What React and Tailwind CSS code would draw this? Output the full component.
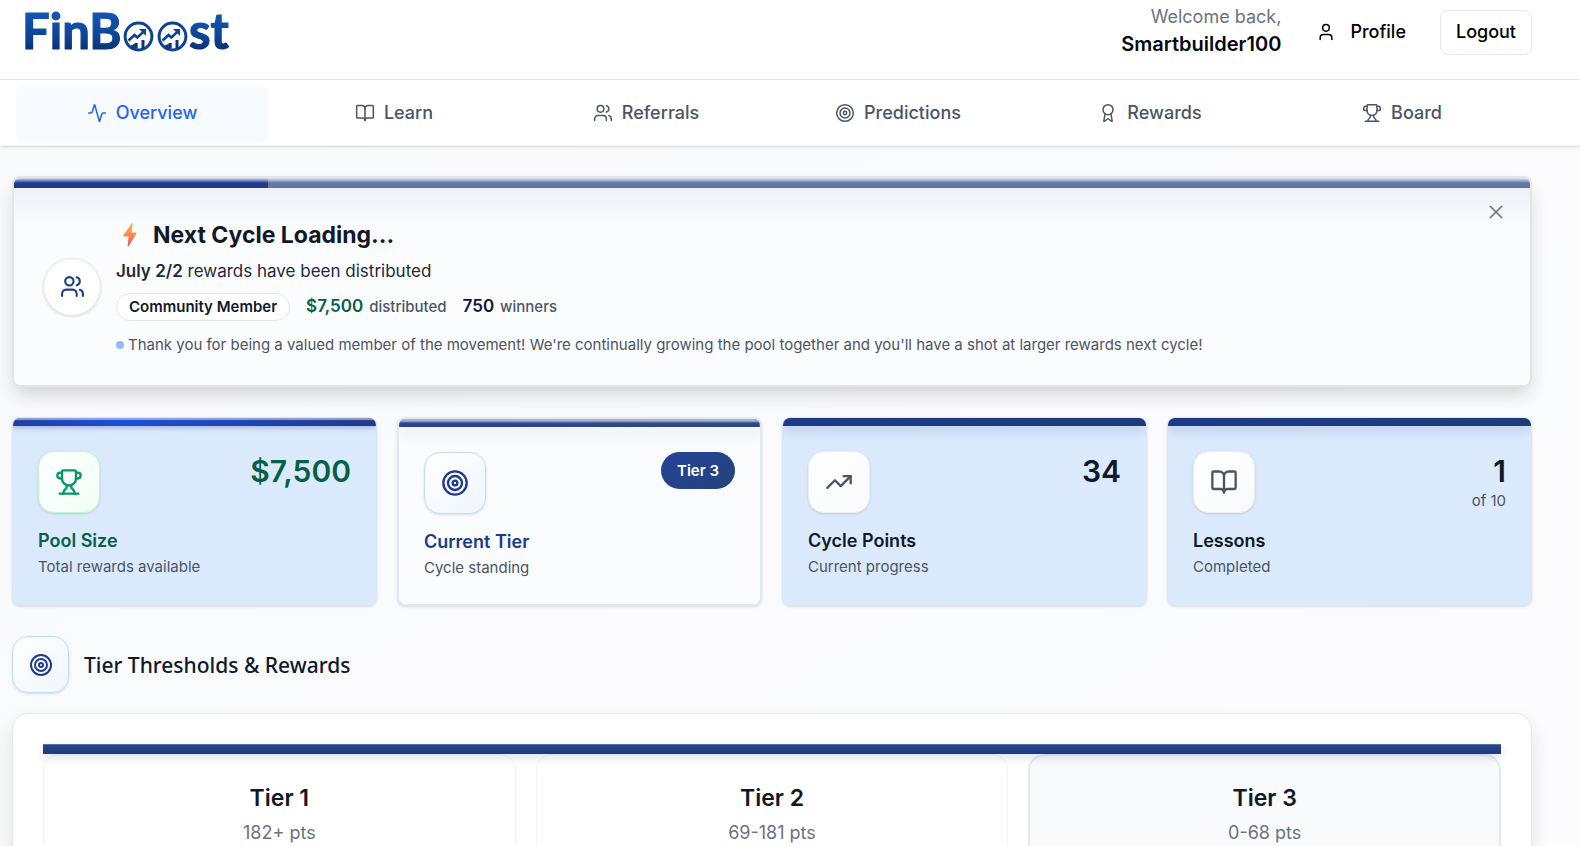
import React from 'react';
import { Activity, Award, BookOpen, Target, TrendingUp, Trophy, User, Users, X } from 'lucide-react';

const tabs = [
  { label: 'Overview', icon: Activity },
  { label: 'Learn', icon: BookOpen },
  { label: 'Referrals', icon: Users },
  { label: 'Predictions', icon: Target },
  { label: 'Rewards', icon: Award },
  { label: 'Board', icon: Trophy },
];

const tiers = [
  { name: 'Tier 1', range: '182+ pts', style: 'border-gray-100 bg-white' },
  { name: 'Tier 2', range: '69-181 pts', style: 'border-gray-100 bg-white' },
  { name: 'Tier 3', range: '0-68 pts', style: 'border-slate-200 bg-[#f9fafc] inset-ring inset-ring-slate-200' },
];

function LogoCoin({ x }) {
  return (
    <g transform={`translate(${x} 35.5)`}>
      <circle r="13.4" fill="#fff" stroke="#0e4292" strokeWidth="3" />
      <path d="M-10 4 L-4 -1.5 L-1.2 1 L4.6 -4.4" fill="none" stroke="#0d3f90" strokeWidth="2.6" />
      <path d="M0.5 -7.5 H7.5 V-0.5 Z" fill="#0f4699" />
      <path d="M-3.8 12 V6.5 H-0.8 V12 Z M3 12 V3.5 H6 V12 Z" fill="#0b347c" />
      <path d="M-8.5 9.5 L-3.6 7 V12.5 Z" fill="#0b347c" />
    </g>
  );
}

function Logo() {
  return (
    <svg width="212" height="64" viewBox="0 0 212 64" className="overflow-visible" role="img" aria-label="FinBoost">
      <defs>
        <linearGradient id="logoBlue" gradientUnits="userSpaceOnUse" x1="0" y1="12" x2="0" y2="50">
          <stop offset="0" stopColor="#1256b4" />
          <stop offset="0.6" stopColor="#0e4596" />
          <stop offset="1" stopColor="#0b2f70" />
        </linearGradient>
      </defs>
      <g fill="url(#logoBlue)" stroke="url(#logoBlue)" strokeWidth="1.2" fontFamily="Lato, sans-serif" fontWeight="700" fontSize="49">
        <text x="-2" y="48">FinB</text>
        <text x="165" y="48">st</text>
      </g>
      <LogoCoin x={114.5} />
      <LogoCoin x={148.5} />
    </svg>
  );
}

function Bolt() {
  return (
    <svg width="16" height="24" viewBox="0 0 16 24" aria-hidden="true">
      <defs>
        <linearGradient id="bolt" x1="0" y1="0" x2="0" y2="1">
          <stop offset="0" stopColor="#fdb44b" />
          <stop offset="0.5" stopColor="#fb8a4c" />
          <stop offset="1" stopColor="#f0475f" />
        </linearGradient>
      </defs>
      <path d="M9.6 .6 1.4 12.3c-.4.6-.1 1.1.6 1.1h4.6L5.6 23c-.1.7.6.8 1 .2l7.8-12.4c.4-.6.1-1.2-.6-1.2H9.6L10.7 1c.1-.7-.7-1-1.1-.4Z" fill="url(#bolt)" />
    </svg>
  );
}

function IconTile({ icon: Icon, size = 'size-[62px]', iconSize = 28, style }) {
  return (
    <div className={`flex shrink-0 items-center justify-center rounded-2xl border bg-gradient-to-br from-white shadow-sm ${size} ${style}`}>
      <Icon size={iconSize} />
    </div>
  );
}

function StatCard({ card, stripe, icon, tile, title, titleColor, note, children }) {
  return (
    <article className={`flex flex-col overflow-hidden rounded-lg shadow-sm ${card}`}>
      <div className={`h-2 shrink-0 ${stripe}`} />
      <div className="flex flex-1 flex-col px-[25px] pt-[25px] pb-6">
        <div className="flex items-start justify-between">
          <IconTile icon={icon} style={tile} />
          {children}
        </div>
        <h3 className={`mt-[14px] text-lg/7 font-semibold ${titleColor}`}>{title}</h3>
        <p className="text-[15px]/6 text-[#4b5563]">{note}</p>
      </div>
    </article>
  );
}

const blueCard = 'border border-[#dbe6f5] bg-gradient-to-br from-[#dbe9fd] to-[#dceafd]';
const plainTile = 'border-[#e9eef5] to-[#f9fafb] text-[#4b5563]';
const navyStripe = 'bg-gradient-to-r from-[#1e3a8a] to-[#1c3c78] shadow-[0_4px_12px_rgba(30,58,138,0.18)]';

export default function App() {
  return (
    <div className="min-h-screen bg-gradient-to-br from-[#f8f9fb] to-[#fcfcfe] font-['Inter',sans-serif] text-[#111827]">
      <header className="flex items-start justify-between border-b border-gray-200 bg-white pt-[5px] pr-12 pb-5 pl-6 shadow-sm">
        <a href="#home" className="-mt-1 h-[55px]"><Logo /></a>
        <div className="flex items-center">
          <div className="text-right">
            <p className="text-lg/6 text-[#6b7280]">Welcome back,</p>
            <p className="text-xl/[30px] font-semibold text-gray-950">Smartbuilder100</p>
          </div>
          <button className="ml-[35px] flex items-center gap-[14px] text-lg font-medium text-black">
            <User size={20} strokeWidth={1.8} />
            Profile
          </button>
          <button className="ml-[34px] h-[45px] rounded-lg border border-gray-200 bg-white px-[15px] text-lg font-medium text-black">Logout</button>
        </div>
      </header>

      <nav className="grid grid-cols-6 border-b border-gray-100 bg-white pt-[5px] pr-[52px] pb-1 pl-4 shadow-sm">
        {tabs.map(({ label, icon: Icon }, i) => (
          <button
            key={label}
            className={`flex h-14 items-center justify-center gap-[9px] rounded-lg text-lg font-medium ${
              i === 0 ? 'bg-[#f7faff] text-[#2563eb] shadow-[0_1px_1px_rgba(15,23,42,0.04)]' : 'text-[#4b5563]'
            }`}
          >
            <Icon size={20} strokeWidth={1.8} />
            {label}
          </button>
        ))}
      </nav>

      <main className="pt-[30px] pr-12 pl-3">
        <section className="relative overflow-hidden rounded-lg border-2 border-[#e5e5e7] bg-[#fbfcfe] shadow-[0_10px_18px_-3px_rgba(0,0,0,0.16)]">
          <div className="flex h-[10px]">
            <div className="w-[254px] bg-gradient-to-b from-[#dfe3ee] from-0% via-[#1e3a8a] via-50% to-[#1e3a8a]" />
            <div className="flex-1 bg-gradient-to-b from-[#e5e9f1] from-0% via-[#6179a8] via-50% to-[#5f77a8]" />
          </div>
          <div className="flex items-center gap-[15px] bg-gradient-to-b from-[#f0f1f7] to-transparent to-20% px-[29px] py-7">
            <div className="flex size-[58px] shrink-0 items-center justify-center rounded-full border border-gray-200 bg-white text-[#1e3a8a] shadow-sm">
              <Users size={25} />
            </div>
            <div className="pt-1">
              <h2 className="flex items-center text-[23px]/[30px] font-bold">
                <span className="mr-[15px] ml-1.5"><Bolt /></span>
                Next Cycle Loading...
              </h2>
              <p className="mt-[7px] text-[17px]/7 text-[#1f2937]"><strong className="font-semibold">July 2/2</strong> rewards have been distributed</p>
              <div className="mt-2 flex h-7 items-center gap-4 font-medium text-[#4b5563]">
                <span className="rounded-full border border-gray-200 bg-white px-3 text-[15px]/[26px] font-semibold text-[#111827]">Community Member</span>
                <span className="flex items-center gap-1.5 text-[15px]"><b className="text-[17px] font-semibold text-[#065f46]">$7,500</b>distributed</span>
                <span className="flex items-center gap-1.5 text-[15px]"><b className="text-[17px] font-semibold text-[#111827]">750</b>winners</span>
              </div>
              <p className="mt-3 flex items-center gap-1 text-[15px]/6 text-[#4b5563]">
                <span className="size-2 shrink-0 rounded-full bg-[#93bbfd]" />
                Thank you for being a valued member of the movement! We're continually growing the pool together and you'll have a shot at larger rewards next cycle!
              </p>
            </div>
          </div>
          <button aria-label="Dismiss" className="absolute top-[23px] right-[23px] text-[#6b7280]"><X size={22} strokeWidth={1.8} /></button>
        </section>

        <section className="mt-[30px] grid grid-cols-4 gap-5">
          <StatCard
            card={blueCard}
            stripe="bg-gradient-to-r from-[#1e3fa0] via-[#1d4ed8] via-30% to-[#1e3a8a] shadow-[0_2px_5px_rgba(30,58,138,0.3),inset_0_2px_1px_rgba(255,255,255,0.5)]"
            icon={Trophy}
            tile="border-[#bbf7d0] to-[#f0fdf4] text-[#059669]"
            title="Pool Size"
            titleColor="text-[#065f46]"
            note="Total rewards available"
          >
            <strong className="text-3xl/10 font-semibold text-[#065f46]">$7,500</strong>
          </StatCard>
          <StatCard
            card="border-2 border-slate-200 bg-[#fafbfd]"
            stripe="bg-gradient-to-r from-[#28428f] to-[#2a4a85] shadow-[0_6px_16px_rgba(30,41,100,0.09),inset_0_3px_2px_rgba(255,255,255,0.6)]"
            icon={Target}
            tile="border-[#bfdbfe] to-[#eff6ff] text-[#1e3a8a]"
            title="Current Tier"
            titleColor="text-[#1e3a8a]"
            note="Cycle standing"
          >
            <span className="rounded-full bg-gradient-to-br from-[#26419a] to-[#24447a] px-4 text-[15px]/[37px] font-semibold text-white">Tier 3</span>
          </StatCard>
          <StatCard card={blueCard} stripe={navyStripe} icon={TrendingUp} tile={plainTile} title="Cycle Points" titleColor="text-[#111827]" note="Current progress">
            <strong className="text-3xl/10 font-semibold">34</strong>
          </StatCard>
          <StatCard card={blueCard} stripe={navyStripe} icon={BookOpen} tile={plainTile} title="Lessons" titleColor="text-[#111827]" note="Completed">
            <div className="text-right">
              <strong className="block text-3xl/10 font-semibold">1</strong>
              <span className="block text-[15px]/5 text-[#4b5563]">of 10</span>
            </div>
          </StatCard>
        </section>

        <div className="mt-[30px] flex items-center gap-[15px]">
          <IconTile icon={Target} size="size-[57px]" iconSize={24} style="border-[#bfdbfe] to-[#eff6ff] text-[#1e3a8a]" />
          <h2 className="font-['Noto_Sans','Open_Sans',sans-serif] text-[21px]/8 font-medium">Tier Thresholds &amp; Rewards</h2>
        </div>

        <section className="mt-5 rounded-2xl border border-gray-200 bg-white p-[30px] shadow-[0_10px_20px_rgba(0,0,0,0.1)]">
          <div className="relative h-[10px] border-t border-[#5870a5] bg-gradient-to-b from-[#284589] to-[#1b3a84] shadow-[0_4px_10px_rgba(30,41,130,0.14)]" />
          <div className="grid grid-cols-3 gap-5">
            {tiers.map(({ name, range, style }) => (
              <article key={name} className={`rounded-2xl border pt-[27px] pb-8 text-center ${style}`}>
                <h3 className="text-[23px]/8 font-semibold">{name}</h3>
                <p className="mt-[3px] text-lg/8 text-[#6b7280]">{range}</p>
              </article>
            ))}
          </div>
        </section>
      </main>
    </div>
  );
}
